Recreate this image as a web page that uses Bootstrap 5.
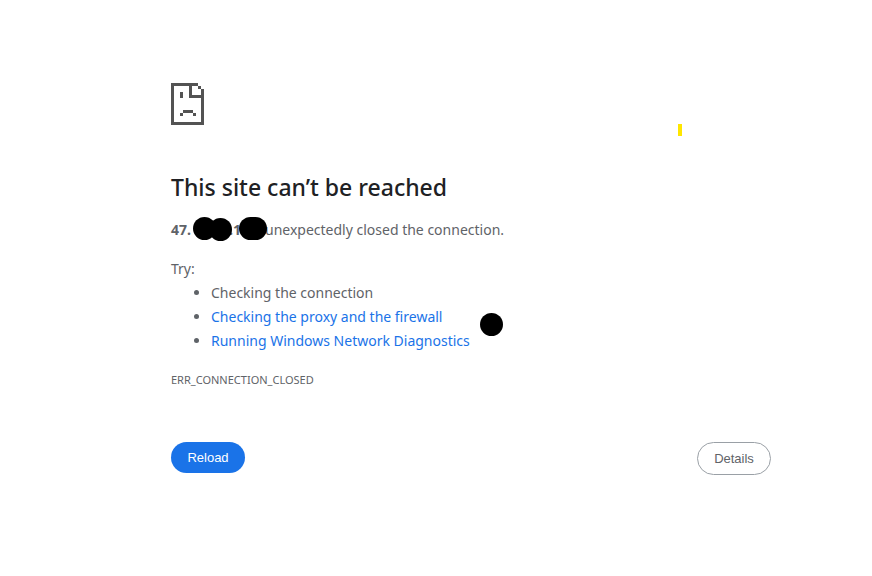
<!DOCTYPE html>
<html lang="en">
<head>
<meta charset="utf-8">
<meta name="viewport" content="width=device-width, initial-scale=1">
<title>This site can’t be reached</title>
<link href="https://cdn.jsdelivr.net/npm/bootstrap@5.3.0/dist/css/bootstrap.min.css" rel="stylesheet">
<style>
body { font-family: "Segoe UI", "Noto Sans", "Open Sans", sans-serif; font-size: 14px; line-height: 24px; color: #5f6368; background: #fff; }
.page-area { padding: 83px 0 0 70px; }
.error-box { max-width: 600px; }
.error-icon { width: 33px; height: 42px; fill: #535353; margin-bottom: 48px; }
h1 { font-size: 23px; line-height: 29px; font-weight: 500; color: #202124; margin-bottom: 16px; }
.summary { margin-bottom: 15px; }
.tips { padding-left: 40px; margin-bottom: 15px; }
.tips a { color: #1a73e8; }
.error-code { font-size: 11px; margin-bottom: 50px; }
.address { width: 94px; }
.blot { background: #000; border-radius: 12px; width: 23px; height: 23px; }
.blot-a { left: 22px; top: -1px; }
.blot-b { left: 38px; top: 0; }
.blot-c { left: 68px; top: -1px; width: 28px; }
.blot-d { left: 309px; top: 56px; }
.marker { left: 507px; top: 41px; width: 4px; height: 12px; background: #ffe600; }
.page-btn { font-family: "Liberation Sans", Arial, sans-serif; font-size: 13px; line-height: 15px; padding: 8px 16px; border-radius: 20px; min-width: 74px; }
.reload { background: #1a73e8; color: #fff; border: 0; font-weight: 500; }
.details { background: #fff; color: #5f6368; border: 1px solid #9aa0a6; }
</style>
</head>
<body>
<div class="page-area">
  <main class="error-box mx-auto position-relative">
    <svg class="error-icon d-block" viewBox="0 0 33 42" shape-rendering="crispEdges" aria-hidden="true">
      <path d="M0 0H27V3H21V12H30V6H33V42H0ZM3 3V39H30V15H18V3ZM27 3H30V6H27ZM9 9H12V15H9ZM12 27H22V30H12ZM9 30H12V33H9ZM22 30H25V33H22Z" fill-rule="evenodd"/>
    </svg>
    <span class="marker position-absolute"></span>
    <h1>This site can’t be reached</h1>
    <p class="summary d-flex">
      <strong class="address position-relative d-flex flex-shrink-0">
        <span>47.</span><span class="ms-auto me-4">.1</span>
        <span class="blot blot-a position-absolute"></span>
        <span class="blot blot-b position-absolute"></span>
        <span class="blot blot-c position-absolute"></span>
      </strong>
      <span>unexpectedly closed the connection.</span>
    </p>
    <div class="position-relative">
      <p class="mb-0">Try:</p>
      <ul class="tips">
        <li>Checking the connection</li>
        <li><a class="text-decoration-none" href="#">Checking the proxy and the firewall</a></li>
        <li><a class="text-decoration-none" href="#">Running Windows Network Diagnostics</a></li>
      </ul>
      <span class="blot blot-d position-absolute"></span>
    </div>
    <p class="error-code">ERR_CONNECTION_CLOSED</p>
    <div class="d-flex justify-content-between align-items-start">
      <button type="button" class="page-btn reload">Reload</button>
      <button type="button" class="page-btn details">Details</button>
    </div>
  </main>
</div>
<script src="https://cdn.jsdelivr.net/npm/bootstrap@5.3.0/dist/js/bootstrap.bundle.min.js"></script>
</body>
</html>
